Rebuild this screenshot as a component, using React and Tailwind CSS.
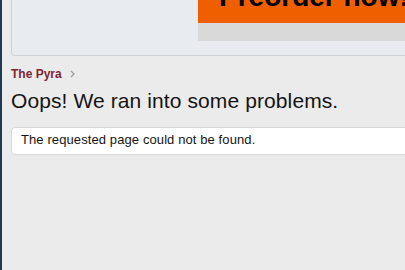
export default function App() {
  return (
    <div className="flex w-[405px] h-[270px] overflow-hidden bg-[#ebebeb]" style={{ fontFamily: '"Liberation Sans", Arial, sans-serif' }}>
      <div className="w-[2px] shrink-0 bg-[#1e3a52]" />
      <div className="flex flex-col w-[440px] shrink-0 pl-[9px]">
        <div className="h-[56px] shrink-0 bg-[#e8ebef] border-x border-b border-[#cfd0d2] rounded-bl-[4px] overflow-hidden">
          <div className="ml-[186px] w-[260px] flex flex-col">
            <div className="h-[23px] bg-[#ef5f00] overflow-hidden">
              <div className="ml-[21px] mt-[-17px] text-[28px] leading-[28px] font-bold text-black whitespace-nowrap">Preorder now!</div>
            </div>
            <div className="h-[18px] bg-[#d9d9d9]" />
          </div>
        </div>
        <div className="mt-[10px] flex items-center h-[16px] text-[12px] leading-[16px]">
          <span className="font-bold text-[#7c2631]">The Pyra</span>
          <svg className="ml-[8px]" width="5" height="8" viewBox="0 0 5 8">
            <path d="M1 1 L4 4 L1 7" fill="none" stroke="#9a9a9a" strokeWidth="1.2" />
          </svg>
        </div>
        <h1 className="mt-[6px] text-[21px] leading-[26px] tracking-[0.1px] font-normal text-[#141414] whitespace-nowrap">Oops! We ran into some problems.</h1>
        <div className="mt-[13px] bg-white border border-[#d8d8d8] rounded-[4px] pl-[9px] pt-[3px] pb-[6px] text-[13px] leading-[17px] tracking-[0.1px] text-[#141414]">
          The requested page could not be found.
        </div>
      </div>
    </div>
  );
}
